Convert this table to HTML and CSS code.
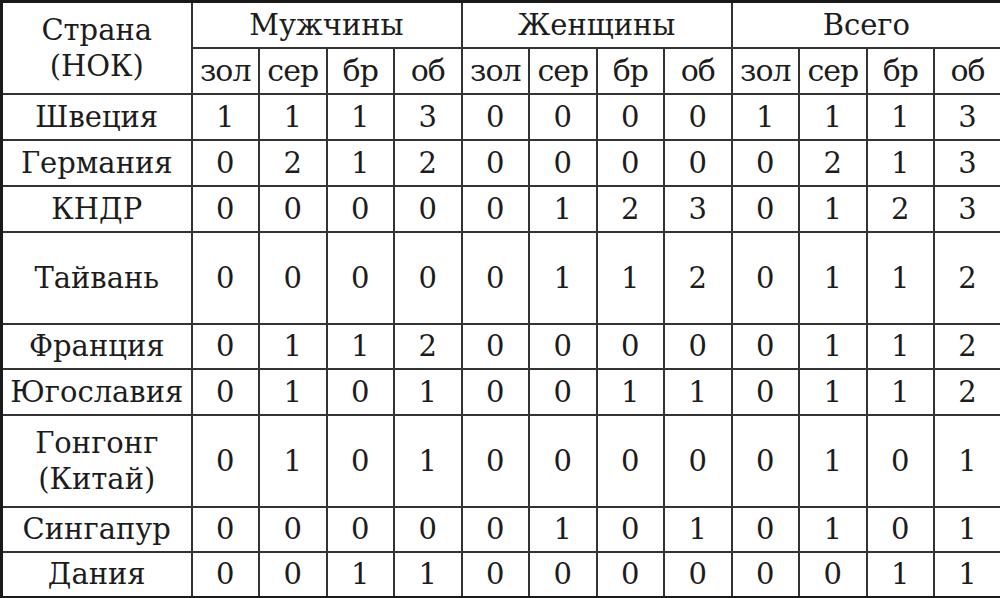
FILE: index.html
```html
<!DOCTYPE html>
<html lang="ru">
<head>
<meta charset="utf-8">
<link rel="stylesheet" href="styles.css">
</head>
<body>
<table class="medals">
<colgroup>
<col class="c-country">
<col span="12" class="c-num">
</colgroup>
<thead>
<tr class="r-h1">
<th rowspan="2" class="country">Страна<br>(НОК)</th>
<th colspan="4">Мужчины</th>
<th colspan="4">Женщины</th>
<th colspan="4">Всего</th>
</tr>
<tr class="r-h2">
<th class="sub">зол</th><th class="sub">сер</th><th class="sub">бр</th><th class="sub">об</th>
<th class="sub">зол</th><th class="sub">сер</th><th class="sub">бр</th><th class="sub">об</th>
<th class="sub">зол</th><th class="sub">сер</th><th class="sub">бр</th><th class="sub">об</th>
</tr>
</thead>
<tbody>
<tr class="r-n"><td class="country">Швеция</td><td>1</td><td>1</td><td>1</td><td>3</td><td>0</td><td>0</td><td>0</td><td>0</td><td>1</td><td>1</td><td>1</td><td>3</td></tr>
<tr class="r-n"><td class="country">Германия</td><td>0</td><td>2</td><td>1</td><td>2</td><td>0</td><td>0</td><td>0</td><td>0</td><td>0</td><td>2</td><td>1</td><td>3</td></tr>
<tr class="r-n"><td class="country">КНДР</td><td>0</td><td>0</td><td>0</td><td>0</td><td>0</td><td>1</td><td>2</td><td>3</td><td>0</td><td>1</td><td>2</td><td>3</td></tr>
<tr class="r-t"><td class="country">Тайвань</td><td>0</td><td>0</td><td>0</td><td>0</td><td>0</td><td>1</td><td>1</td><td>2</td><td>0</td><td>1</td><td>1</td><td>2</td></tr>
<tr class="r-s"><td class="country">Франция</td><td>0</td><td>1</td><td>1</td><td>2</td><td>0</td><td>0</td><td>0</td><td>0</td><td>0</td><td>1</td><td>1</td><td>2</td></tr>
<tr class="r-n"><td class="country">Югославия</td><td>0</td><td>1</td><td>0</td><td>1</td><td>0</td><td>0</td><td>1</td><td>1</td><td>0</td><td>1</td><td>1</td><td>2</td></tr>
<tr class="r-t"><td class="country">Гонгонг<br>(Китай)</td><td>0</td><td>1</td><td>0</td><td>1</td><td>0</td><td>0</td><td>0</td><td>0</td><td>0</td><td>1</td><td>0</td><td>1</td></tr>
<tr class="r-s"><td class="country">Сингапур</td><td>0</td><td>0</td><td>0</td><td>0</td><td>0</td><td>1</td><td>0</td><td>1</td><td>0</td><td>1</td><td>0</td><td>1</td></tr>
<tr class="r-n"><td class="country">Дания</td><td>0</td><td>0</td><td>1</td><td>1</td><td>0</td><td>0</td><td>0</td><td>0</td><td>0</td><td>0</td><td>1</td><td>1</td></tr>
</tbody>
</table>
</body>
</html>
```

FILE: styles.css
```css
html, body {
  margin: 0;
  padding: 0;
  background: #ffffff;
}

.medals {
  width: 1000px;
  height: 598px;
  border-collapse: collapse;
  table-layout: fixed;
  border: 3px solid #1a1a1a;
  font-family: "DejaVu Serif", serif;
  font-size: 29px;
  color: #1c1c1c;
}

.c-country { width: 190px; }
.c-num { width: 67.5px; }

.medals th,
.medals td {
  border: 2px solid #333333;
  padding: 0;
  text-align: center;
  vertical-align: middle;
  font-weight: normal;
  line-height: 36px;
  white-space: nowrap;
}

.medals .sub {
  font-size: 30px;
  letter-spacing: -1px;
}

.r-h1 { height: 46px; }
.r-h2 { height: 46px; }
.r-n { height: 46px; }
.r-s { height: 45px; }
.r-t { height: 92px; }
```
